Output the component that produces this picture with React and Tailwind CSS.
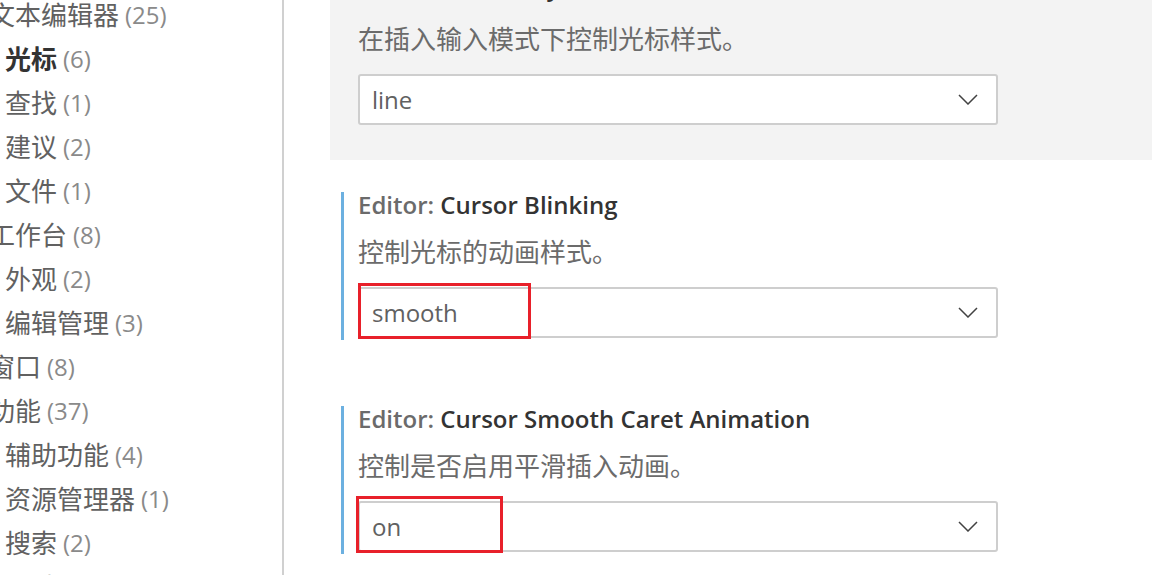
const tocItems = [
  { label: "文本编辑器", count: 25, level: 0 },
  { label: "光标", count: 6, level: 1, active: true },
  { label: "查找", count: 1, level: 1 },
  { label: "建议", count: 2, level: 1 },
  { label: "文件", count: 1, level: 1 },
  { label: "工作台", count: 8, level: 0 },
  { label: "外观", count: 2, level: 1 },
  { label: "编辑管理", count: 3, level: 1 },
  { label: "窗口", count: 8, level: 0 },
  { label: "功能", count: 37, level: 0 },
  { label: "辅助功能", count: 4, level: 1 },
  { label: "资源管理器", count: 1, level: 1 },
  { label: "搜索", count: 2, level: 1 },
  { label: "调试", count: 5, level: 1 },
];

const settings = [
  {
    title: "Cursor Style",
    desc: "在插入输入模式下控制光标样式。",
    value: "line",
  },
  {
    title: "Cursor Blinking",
    desc: "控制光标的动画样式。",
    value: "smooth",
    mark: "smooth",
  },
  {
    title: "Cursor Smooth Caret Animation",
    desc: "控制是否启用平滑插入动画。",
    value: "on",
    mark: "on",
  },
];

function Chevron() {
  return (
    <svg width="20" height="11" viewBox="0 0 20 11" fill="none">
      <polyline points="1,1 10,10 19,1" stroke="#424242" strokeWidth="1.5" />
    </svg>
  );
}

function TocRow({ item }) {
  return (
    <div
      className={
        "h-[44px] flex items-center whitespace-nowrap " +
        (item.level === 0 ? "ml-[-11px]" : "ml-[5px]")
      }
    >
      <span
        className={
          "text-[26px] " +
          (item.active ? "font-bold text-[#333333]" : "text-[#616161]")
        }
      >
        {item.label}
      </span>
      <span className="text-[24px] text-[#8a8a8a] ml-[6px]">
        ({item.count})
      </span>
    </div>
  );
}

// 第一项是当前聚焦的设置（灰底），其余是普通项（左侧蓝条）
function SettingItem({ item, index }) {
  const first = index === 0;
  const wrapClass = first
    ? "bg-[#f3f3f3] mt-[-21px] pb-[35px]"
    : index === 1
    ? "mt-[32px]"
    : "mt-[66px]";

  return (
    <div className={wrapClass}>
      <div className="flex pl-[11px]">
        <div
          className={
            "w-[3px] shrink-0 " + (first ? "bg-transparent" : "bg-[#6cb0e0]")
          }
        />
        <div className={"pl-[14px] " + (first ? "" : "pb-[2px]")}>
          <div
            className={
              "h-[26px] leading-[26px] text-[24px] font-semibold whitespace-nowrap " +
              (first ? "mt-[-5px]" : "")
            }
          >
            <span className="text-[#6b6b6b]">Editor: </span>
            <span className="text-[#333333]">{item.title}</span>
          </div>
          <div
            className={
              "h-[30px] leading-[30px] text-[26px] text-[#6b6b6b] whitespace-nowrap " +
              (first ? "mt-[24px]" : "mt-[19px]")
            }
          >
            {item.desc}
          </div>
          <div className="relative mt-[20px] w-[640px] h-[51px] rounded-[3px] border-2 border-[#cecece] bg-white flex items-center justify-between pl-[12px] pr-[18px]">
            <span className="text-[24px] text-[#616161]">{item.value}</span>
            <Chevron />
            {item.mark === "smooth" && (
              <div className="absolute left-[-2px] top-[-6px] w-[173px] h-[56px] border-[3px] border-[#e8202a]" />
            )}
            {item.mark === "on" && (
              <div className="absolute left-[-4px] top-[-7px] w-[147px] h-[57px] border-[3px] border-[#e8202a]" />
            )}
          </div>
        </div>
      </div>
    </div>
  );
}

export default function App() {
  return (
    <div
      className="w-[1152px] h-[575px] overflow-hidden bg-white flex"
      style={{ fontFamily: '"Open Sans", "Noto Sans CJK SC", sans-serif' }}
    >
      <div className="w-[284px] shrink-0 border-r-2 border-[#d0d0d0] overflow-hidden">
        <div className="mt-[-7px]">
          {tocItems.map((item) => (
            <TocRow key={item.label} item={item} />
          ))}
        </div>
      </div>
      <div className="flex-1 pl-[46px] flex flex-col">
        {settings.map((item, i) => (
          <SettingItem key={item.title} item={item} index={i} />
        ))}
      </div>
    </div>
  );
}
